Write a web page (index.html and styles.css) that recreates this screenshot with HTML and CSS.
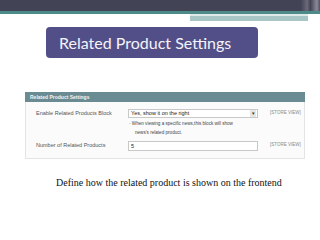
FILE: index.html
```html
<!DOCTYPE html>
<html lang="en">

<head>
    <meta charset="UTF-8">
    <meta name="viewport" content="width=device-width, initial-scale=1.0">
    <title>Related Product Settings</title>
    <link rel="stylesheet" href="styles.css">
</head>

<body>
    <!-- Slide top band -->
    <div class="topbar">
        <div class="band"></div>
        <div class="accent"></div>
    </div>

    <h1 class="title">Related Product Settings</h1>

    <!-- Admin settings panel -->
    <div class="panel">
        <div class="panel-head">Related Product Settings</div>
        <div class="panel-body">
            <div class="row">
                <label>Enable Related Products Block</label>
                <div class="field">
                    <div class="select">
                        <span>Yes, show it on the right</span>
                        <span class="arrow">&#9662;</span>
                    </div>
                    <p class="note">
                        <span class="bullet">-</span> When viewing a specific news,this block will show<br>
                        <span class="indent">news's related product.</span>
                    </p>
                </div>
                <span class="scope">[STORE VIEW]</span>
            </div>
            <div class="row">
                <label>Number of Related Products</label>
                <div class="field">
                    <div class="input">5</div>
                </div>
                <span class="scope">[STORE VIEW]</span>
            </div>
        </div>
    </div>

    <p class="caption">Define how the related product is shown on the frontend</p>
</body>

</html>
```

FILE: styles.css
```css
body {
    margin: 0;
    padding: 0;
    background: #fff;
    font-family: "Liberation Sans", Arial, sans-serif;
    color: #333;
    width: 320px;
    height: 240px;
    overflow: hidden;
}

.topbar {
    height: 21px;
}

.band {
    height: 11px;
    background: linear-gradient(to right, #434356 0%, #434356 94%, #6a6a7a 96%, #434356 97%, #8a8a98 99%, #505062 100%);
    border-bottom: 3px solid #4d8b89;
}

.accent {
    margin-left: 190px;
    width: 118px;
    height: 5px;
    border-top: 2px solid #dfe9ea;
    background: #a9c6c7;
}

.title {
    margin: 6px 0 0 46px;
    width: 199px;
    height: 31px;
    padding-left: 13px;
    background: #524f88;
    border-radius: 4px;
    color: #f4f4f8;
    font-family: Lato, "Open Sans", sans-serif;
    font-weight: normal;
    font-size: 16px;
    line-height: 31px;
    white-space: nowrap;
}

.panel {
    margin: 34px 0 0 25px;
    width: 280px;
}

.panel-head {
    height: 10px;
    background: #6a8b92;
    color: #f2f5f6;
    font-size: 5px;
    font-weight: bold;
    line-height: 10px;
    padding-left: 5px;
}

.panel-body {
    background: #fbfbfb;
    border: 1px solid #e4e4e4;
    border-top: 0;
    padding: 7px 0 7px 10px;
}

.row {
    display: grid;
    grid-template-columns: 92px 130px auto;
    align-items: start;
    margin-bottom: 4px;
}

.row:last-child {
    margin-bottom: 0;
}

label {
    font-size: 5.5px;
    color: #555;
    line-height: 8px;
}

.select,
.input {
    height: 7px;
    border: 1px solid #c8c8c8;
    background: #fff;
    font-size: 5.5px;
    line-height: 7px;
    padding-left: 2px;
    color: #222;
    display: flex;
    justify-content: space-between;
}

.input {
    height: 8px;
    line-height: 8px;
}

.arrow {
    width: 6px;
    margin-right: 1px;
    font-size: 5px;
    text-align: center;
    background: #e6e6e6;
    color: #333;
}

.note {
    margin: 1px 0 0 1px;
    font-size: 4.6px;
    line-height: 9px;
    color: #444;
}

.bullet {
    color: #888;
}

.indent {
    padding-left: 6px;
}

.scope {
    padding-left: 12px;
    font-size: 4.5px;
    line-height: 8px;
    color: #8a8a8a;
    white-space: nowrap;
}

.caption {
    margin: 18px 0 0 56px;
    font-family: "Liberation Serif", Georgia, serif;
    font-size: 10px;
    color: #111;
}
```
